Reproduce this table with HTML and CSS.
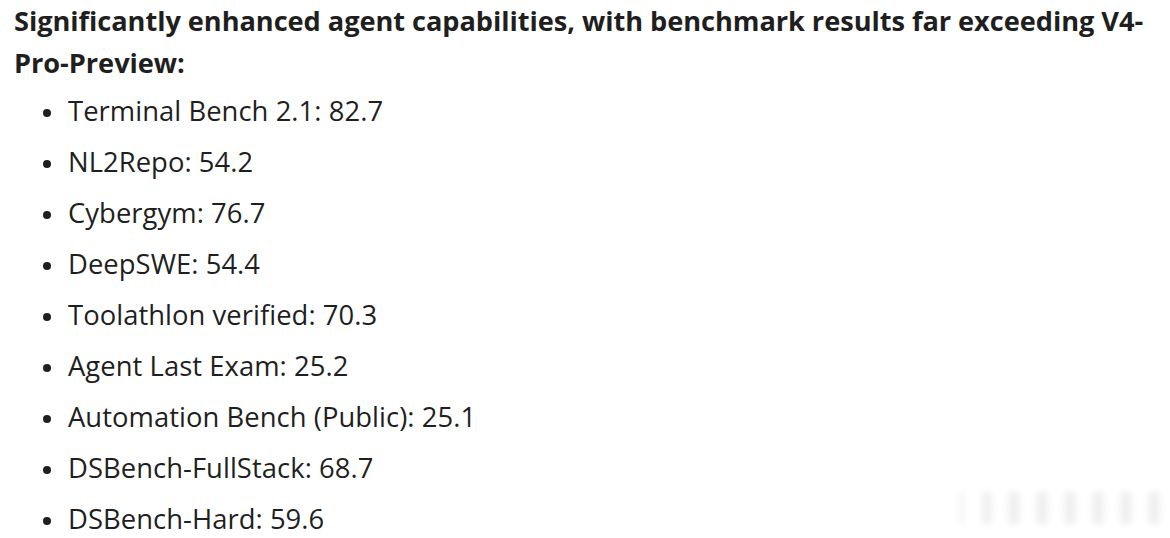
FILE: index.html
```html
<!DOCTYPE html>
<html lang="en">
<head>
<meta charset="utf-8">
<link rel="stylesheet" href="styles.css">
</head>
<body>
<div class="page">
  <p class="lead">Significantly enhanced agent capabilities, with benchmark results far exceeding V4-Pro-Preview:</p>
  <ul class="list">
    <li class="item"><span class="dot"></span><span>Terminal Bench 2.1: 82.7</span></li>
    <li class="item"><span class="dot"></span><span>NL2Repo: 54.2</span></li>
    <li class="item"><span class="dot"></span><span>Cybergym: 76.7</span></li>
    <li class="item"><span class="dot"></span><span>DeepSWE: 54.4</span></li>
    <li class="item"><span class="dot"></span><span>Toolathlon verified: 70.3</span></li>
    <li class="item"><span class="dot"></span><span>Agent Last Exam: 25.2</span></li>
    <li class="item"><span class="dot"></span><span>Automation Bench (Public): 25.1</span></li>
    <li class="item"><span class="dot"></span><span>DSBench-FullStack: 68.7</span></li>
    <li class="item"><span class="dot"></span><span>DSBench-Hard: 59.6</span></li>
  </ul>
  <div class="mark" aria-hidden="true">
    <span class="bar b1"></span><span class="bar b2"></span><span class="bar b3"></span><span class="bar b4"></span><span class="bar b5"></span><span class="bar b6"></span><span class="bar b7"></span><span class="bar b8"></span>
  </div>
</div>
</body>
</html>
```
FILE: styles.css
```css
html, body {
  margin: 0;
  padding: 0;
  background: #ffffff;
}
.page {
  position: relative;
  width: 1170px;
  height: 538px;
  overflow: hidden;
  font-family: "Open Sans", "Noto Sans", sans-serif;
  color: #1f1f1f;
}
.lead {
  margin: 0;
  padding: 0 8px 0 14px;
  font-size: 27.2px;
  font-weight: 700;
  line-height: 42.3px;
  letter-spacing: -0.05px;
}
.list {
  list-style: none;
  margin: 0;
  padding: 0 0 0 43px;
}
.item {
  display: flex;
  align-items: center;
  gap: 17px;
  height: 51px;
  font-size: 27.4px;
  letter-spacing: 0.05px;
}
.dot {
  width: 8px;
  height: 8px;
  margin-top: 6px;
  border-radius: 50%;
  background: #1f1f1f;
  flex: none;
}
.mark {
  position: absolute;
  left: 958px;
  top: 492px;
  width: 210px;
  height: 36px;
  display: flex;
  gap: 16px;
  filter: blur(3px);
  opacity: 0.22;
}
.bar {
  display: block;
  height: 32px;
  width: 12px;
  background: #bdbdbd;
}
.b1 { width: 8px; background: #e0e0e0; }
.b2 { width: 10px; }
```
